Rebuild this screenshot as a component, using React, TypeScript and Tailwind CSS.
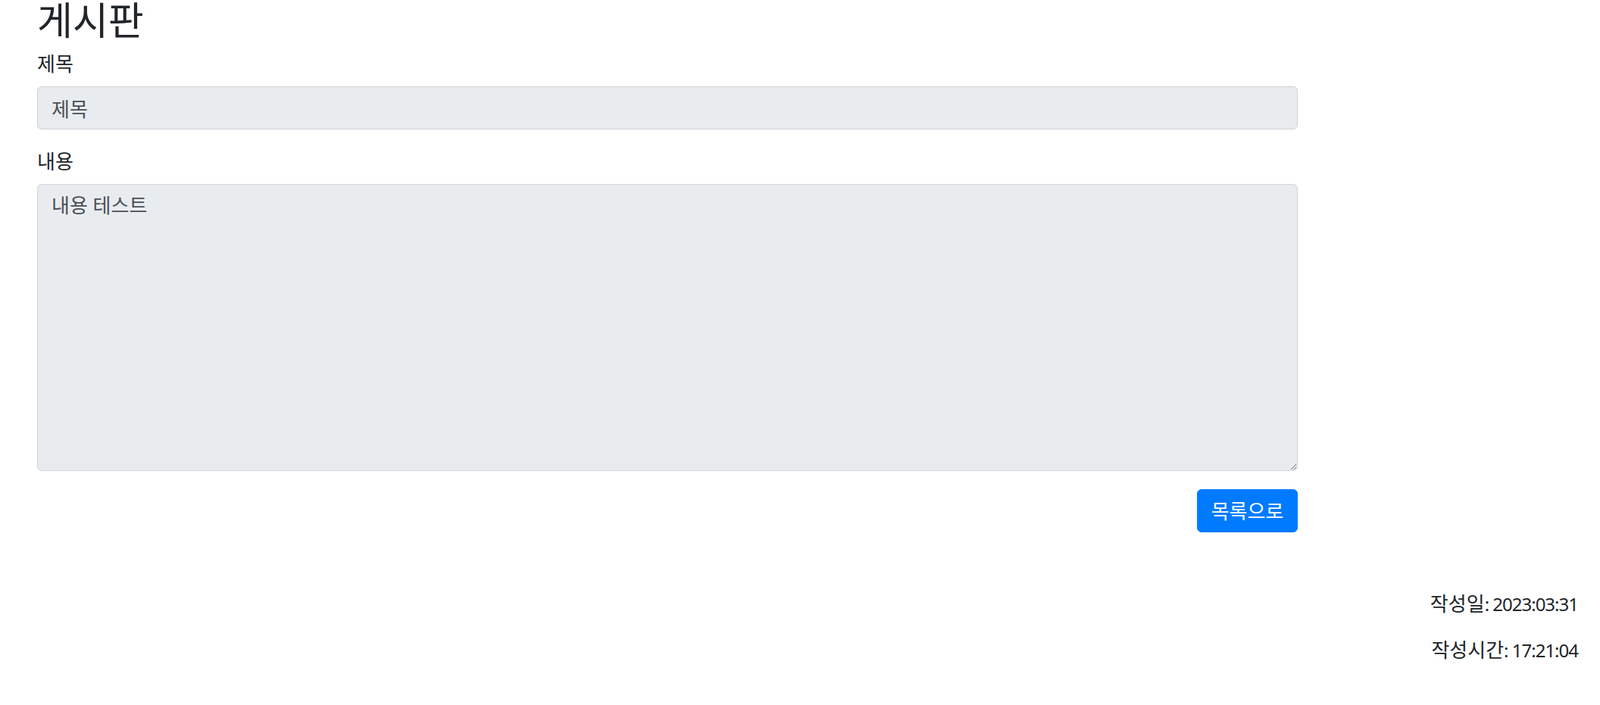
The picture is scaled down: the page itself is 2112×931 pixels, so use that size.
import React from "react";

export default function App() {
  return (
    <div className="min-h-screen bg-white text-[#212529] font-['Noto_Sans','Noto_Sans_CJK_KR',sans-serif]">
      <div className="w-[1713px] pl-[49px]">
        <h2 className="text-[51px] leading-[57px] mb-[9px] font-normal font-['Liberation_Sans','Noto_Sans_CJK_KR',sans-serif]">게시판</h2>
        <div className="mb-[24px]">
          <label className="block text-[26px] leading-[36px] mb-[12px]">제목</label>
          <input
            readOnly
            value="제목"
            className="block w-full h-[57px] px-[18px] py-[9px] text-[26px] leading-[36px] text-[#495057] bg-[#e9ecef] border border-[#ced4da] rounded-[6px] outline-none"
          />
        </div>
        <div className="mb-[24px]">
          <label className="block text-[26px] leading-[36px] mb-[12px]">내용</label>
          <textarea
            readOnly
            rows={10}
            value="내용 테스트"
            className="block w-full h-[379px] px-[18px] py-[9px] text-[26px] leading-[36px] text-[#495057] bg-[#e9ecef] border border-[#ced4da] rounded-[6px] outline-none"
          />
        </div>
        <div className="flex justify-end">
          <button className="w-[133px] h-[57px] flex items-center justify-center bg-[#007bff] text-white text-[26px] leading-[36px] rounded-[6px] border border-[#007bff]">
            목록으로
          </button>
        </div>
      </div>
      <div className="mt-[76px] pr-[29px] text-right text-[24px] leading-[36px]">
        <p className="mb-[24px]">
          <span className="text-[26px]">작성일</span>
          <span className="tracking-[-1px]">: 2023:03:31</span>
        </p>
        <p>
          <span className="text-[26px]">작성시간</span>
          <span className="tracking-[-1px]">: 17:21:04</span>
        </p>
      </div>
    </div>
  );
}
